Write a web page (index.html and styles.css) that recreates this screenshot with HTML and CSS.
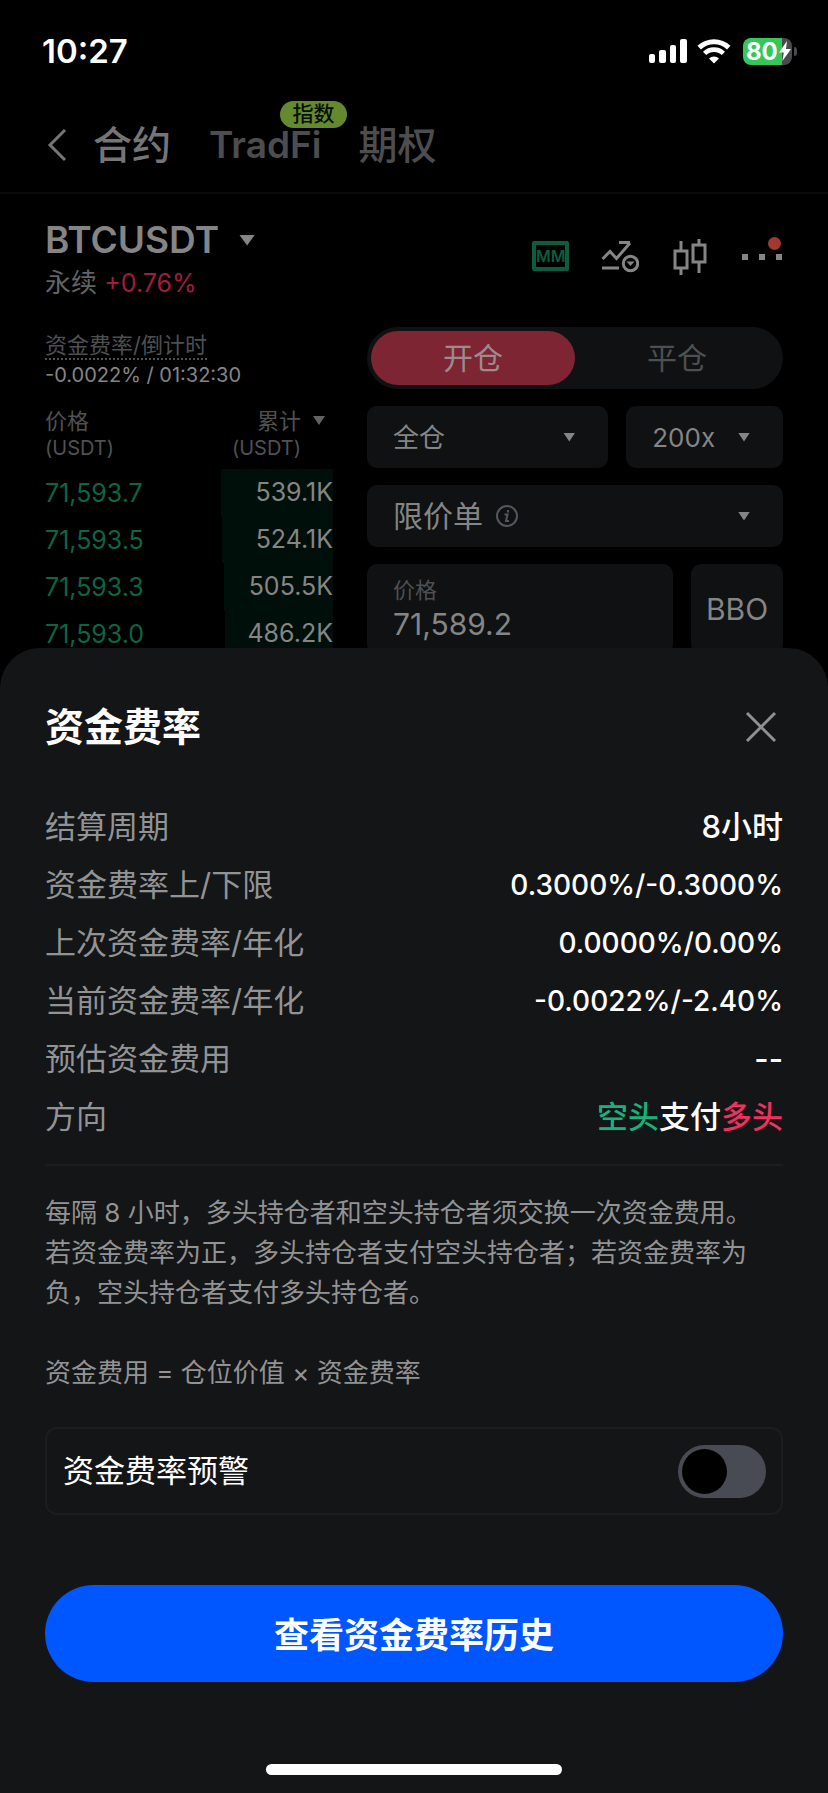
FILE: index.html
```html
<!DOCTYPE html>
<html lang="zh-CN">

    <head>
        <meta charset="utf-8">
        <meta name="viewport" content="width=device-width, initial-scale=1">
        <title>资金费率</title>
        <link rel="stylesheet" href="styles.css">
    </head>

    <body>

        <div class="statusbar">
            <span class="clock">10:27</span>
            <div class="status-icons">
                <svg class="signal" width="38" height="26" viewBox="0 0 38 26" fill="#fff">
                    <rect x="0" y="16" width="6" height="9" rx="2"/>
                    <rect x="10" y="12" width="7" height="13" rx="2"/>
                    <rect x="21" y="7" width="6" height="18" rx="2"/>
                    <rect x="31" y="1" width="7" height="24" rx="2"/>
                </svg>
                <svg class="wifi" width="34" height="26" viewBox="0 0 34 26">
                    <path d="M2.2 9.6a21.5 21.5 0 0 1 29.6 0" fill="none" stroke="#fff" stroke-width="5"/>
                    <path d="M7.6 15.4a13.6 13.6 0 0 1 18.8 0" fill="none" stroke="#fff" stroke-width="4.6"/>
                    <path d="M12 20.400a7.500 7.500 0 0 1 10 0L17 25.600z" fill="#fff"/>
                </svg>
                <div class="battery">
                    <span>80</span>
                    <svg width="14" height="20" viewBox="0 0 14 20"><path d="M9 0L1 11.4h4.8L4.4 20 13 8H8z" fill="#fff"/></svg>
                </div>
            </div>
        </div>

        <nav class="topnav">
            <button class="back" aria-label="返回">
                <svg width="20" height="34" viewBox="0 0 20 34"><path d="M18 2L3 17l15 15" fill="none" stroke="currentColor" stroke-width="3"/></svg>
            </button>
            <a href="#" class="active">合约</a>
            <a href="#" class="tradfi">TradFi<span class="badge">指数</span></a>
            <a href="#">期权</a>
        </nav>

        <div class="symbol">
            <div>
                <button class="pair">BTCUSDT <i class="caret big"></i></button>
                <div class="change">永续 <span>+0.76%</span></div>
            </div>
            <div class="tools">
                <button class="mm">MM</button>
                <button aria-label="图表">
                    <svg width="38" height="38" viewBox="0 0 38 38" fill="none" stroke="currentColor" stroke-width="3">
                        <path d="M1.500 22l7.500-7.500 6.500 7L29 6M18 5.500h11M1 31h17"/>
                        <circle cx="29.500" cy="26.500" r="7.200"/>
                        <path d="M25.500 24.500h8l-4 4.500z" fill="currentColor" stroke="none"/>
                    </svg>
                </button>
                <button aria-label="K线">
                    <svg width="38" height="38" viewBox="0 0 38 38" fill="none" stroke="currentColor" stroke-width="3">
                        <path d="M4 14h12v17H4zM22 8h12v17H22zM10 4v10M10 31v7M28 2v6M28 25v11"/>
                    </svg>
                </button>
                <button class="more" aria-label="更多">
                    <svg width="42" height="38" viewBox="0 0 42 38">
                        <path d="M1 17h6v6H1zM18 17h6v6h-6zM35 17h6v6h-6z" fill="currentColor"/>
                    </svg>
                </button>
            </div>
        </div>

        <main class="trade">

            <div class="book">
                <div class="funding"><a href="#">资金费率/倒计时</a></div>
                <div class="countdown">-0.0022% / 01:32:30</div>
                <table>
                    <thead>
                        <tr>
                            <th>价格<br><small>(USDT)</small></th>
                            <th class="total"><div>累计<br><small>(USDT)</small></div><i class="caret small"></i></th>
                        </tr>
                    </thead>
                    <tbody>
                        <tr><td>71,593.7</td><td><span class="depth" style="width:78%">539.1K</span></td></tr>
                        <tr><td>71,593.5</td><td><span class="depth" style="width:77%">524.1K</span></td></tr>
                        <tr><td>71,593.3</td><td><span class="depth" style="width:76%">505.5K</span></td></tr>
                        <tr><td>71,593.0</td><td><span class="depth" style="width:75%">486.2K</span></td></tr>
                    </tbody>
                </table>
            </div>

            <form class="order">
                <div class="side">
                    <button type="button" class="on">开仓</button>
                    <button type="button">平仓</button>
                </div>
                <div class="row">
                    <div class="field margin">
                        <select aria-label="保证金模式"><option>全仓</option></select>
                        <i class="caret"></i>
                    </div>
                    <div class="field lever">
                        <select aria-label="杠杆"><option>200x</option></select>
                        <i class="caret"></i>
                    </div>
                </div>
                <div class="field type">
                    <select aria-label="订单类型"><option>限价单</option></select>
                    <svg width="24" height="24" viewBox="0 0 24 24" fill="none" stroke="#55575a" stroke-width="2">
                        <circle cx="12" cy="12" r="10"/>
                        <path d="M9.500 10.500h3l-1.500 6.500h3M13 6v2.500"/>
                    </svg>
                    <i class="caret"></i>
                </div>
                <div class="row">
                    <div class="price">
                        <label for="price">价格</label>
                        <input id="price" type="text" value="71,589.2">
                    </div>
                    <button type="button" class="bbo">BBO</button>
                </div>
            </form>

        </main>

        <section class="sheet">

            <div class="sheet-head">
                <h1>资金费率</h1>
                <button class="close" aria-label="关闭">
                    <svg width="32" height="32" viewBox="0 0 32 32"><path d="M2 2l28 28M30 2L2 30" stroke="currentColor" stroke-width="3"/></svg>
                </button>
            </div>

            <dl class="info">
                <div><dt>结算周期</dt><dd>8小时</dd></div>
                <div><dt>资金费率上/下限</dt><dd class="num">0.3000%/-0.3000%</dd></div>
                <div><dt>上次资金费率/年化</dt><dd class="num">0.0000%/0.00%</dd></div>
                <div><dt>当前资金费率/年化</dt><dd class="num">-0.0022%/-2.40%</dd></div>
                <div><dt>预估资金费用</dt><dd>--</dd></div>
                <div><dt>方向</dt><dd><span class="green">空头</span>支付<span class="red">多头</span></dd></div>
            </dl>

            <div class="desc">
                <p>每隔 8 小时，多头持仓者和空头持仓者须交换一次资金费用。<br>若资金费率为正，多头持仓者支付空头持仓者；若资金费率为负，空头持仓者支付多头持仓者。</p>
                <p>资金费用 = 仓位价值 × 资金费率</p>
            </div>

            <div class="alert">
                <label for="alert">资金费率预警</label>
                <input id="alert" class="switch" type="checkbox" role="switch">
            </div>

            <button class="history">查看资金费率历史</button>

            <div class="home"></div>

        </section>

    </body>

</html>
```
FILE: styles.css
```css
*{
    box-sizing: border-box;
}

body{
    margin: 0;
    min-height: 100vh;
    background-color: #000;
    color: #858585;
    font-family: Inter, "Noto Sans CJK SC", sans-serif;
}

button, input, select{
    font: inherit;
    color: inherit;
    background: none;
    border: none;
    margin: 0;
    padding: 0;
    appearance: none;
}

button{
    cursor: pointer;
}

a{
    color: inherit;
    text-decoration: none;
}

svg{
    display: block;
}

.caret{
    width: 12px;
    height: 9px;
    background-color: #858585;
    clip-path: polygon(0 0, 100% 0, 50% 100%);
}

.caret.big{
    width: 16px;
    height: 11px;
}

.caret.small{
    background-color: #626262;
}

/* status bar */

.statusbar{
    display: flex;
    justify-content: space-between;
    align-items: center;
    height: 102px;
    padding: 0 31px 0 42px;
    color: #fff;
}

.clock{
    font-size: 33px;
    font-weight: 600;
}

.status-icons{
    display: flex;
    align-items: center;
    gap: 10px;
}

.battery{
    display: flex;
    align-items: center;
    position: relative;
    width: 49px;
    height: 27px;
    margin: 0 5px 0 2px;
    padding-left: 3px;
    border-radius: 8px;
    background: linear-gradient(to right, #34c759 80%, #4a4a4c 80%);
    font-size: 24px;
    font-weight: 700;
    line-height: 27px;
}

.battery::after{
    content: "";
    position: absolute;
    right: -5px;
    top: 9px;
    width: 3px;
    height: 9px;
    border-radius: 0 3px 3px 0;
    background-color: #4a4a4c;
}

/* nav */

.topnav{
    display: flex;
    align-items: center;
    height: 92px;
    padding: 0 47px 4px;
    border-bottom: 2px solid #0a0a0b;
    font-size: 39px;
    font-weight: 500;
    line-height: 48px;
    color: #4d4d50;
}

.topnav .back{
    margin-right: 26px;
    color: #757575;
}

.topnav a{
    margin-right: 38px;
}

.topnav .active{
    color: #757575;
}

.topnav .tradfi{
    position: relative;
    margin-right: 37px;
    font-size: 37px;
    font-weight: 600;
}

.badge{
    position: absolute;
    left: 71px;
    top: -20px;
    width: 67px;
    height: 27px;
    border-radius: 14px;
    background-color: #64892f;
    color: #071004;
    font-size: 21px;
    font-weight: 500;
    line-height: 26px;
    text-align: center;
}

/* symbol */

.symbol{
    display: flex;
    justify-content: space-between;
    align-items: flex-start;
    padding: 22px 45px 0;
}

.pair{
    display: flex;
    align-items: center;
    gap: 20px;
    font-size: 37px;
    font-weight: 600;
    line-height: 48px;
}

.change{
    font-size: 26px;
    line-height: 38px;
    color: #626365;
}

.change span{
    color: #a11c3d;
    font-size: 25px;
}

.tools{
    display: flex;
    align-items: center;
    gap: 32px;
    padding-top: 21px;
}

.mm{
    width: 37px;
    height: 30px;
    border: 4px solid #0b5c41;
    border-radius: 2px;
    color: #0b5c41;
    font-size: 16px;
    font-weight: 600;
    line-height: 22px;
}

.more{
    position: relative;
}

.more::after{
    content: "";
    position: absolute;
    right: 2px;
    top: 0;
    width: 13px;
    height: 13px;
    border-radius: 50%;
    background-color: #a03a30;
}

/* order book + form */

.trade{
    display: grid;
    grid-template-columns: minmax(0, 9fr) minmax(0, 13fr);
    gap: 34px;
    padding: 25px 45px 0;
}

.funding, .countdown{
    line-height: 30px;
}

.funding{
    margin-top: 3px;
    font-size: 22px;
    color: #4e4f51;
}

.funding a{
    border-bottom: 2px dotted #4e4f51;
}

.countdown{
    font-size: 20px;
}

.book table{
    width: 100%;
    margin-top: 18px;
    border-collapse: collapse;
    font-size: 25px;
}

.book th, .book td{
    width: 50%;
    padding: 0;
    text-align: left;
}

.book th{
    padding-bottom: 8px;
    font-size: 22px;
    font-weight: 400;
    line-height: 26px;
    color: #505153;
}

.book small{
    font-size: 20px;
}

.book .total{
    display: flex;
    justify-content: flex-end;
    gap: 12px;
    width: auto;
    padding-right: 8px;
    text-align: right;
}

.book .total .caret{
    margin-top: 8px;
}

.book td{
    height: 47px;
    color: #0b6546;
}

.book .depth{
    display: block;
    margin-left: auto;
    background-color: #010f0a;
    color: #858585;
    line-height: 47px;
    text-align: right;
}

.order{
    display: flex;
    flex-direction: column;
    gap: 17px;
}

.side{
    display: flex;
    height: 62px;
    padding: 4px;
    border-radius: 31px;
    background-color: #0f1113;
    font-size: 30px;
    color: #4e4f51;
}

.side button{
    flex: 1;
    padding-bottom: 4px;
    border-radius: 27px;
}

.side .on{
    background-color: #7d2533;
    color: #9b8b8d;
}

.row{
    display: flex;
    gap: 18px;
}

.field, .price, .bbo{
    border-radius: 10px;
    background-color: #0f1113;
}

.field{
    display: flex;
    align-items: center;
    height: 62px;
    padding: 0 33px 0 26px;
    font-size: 26px;
}

.field .caret{
    margin-left: auto;
}

.margin{
    width: 58%;
}

.lever{
    flex: 1;
}

.type{
    gap: 12px;
    font-size: 30px;
}

.price{
    flex: 1;
    min-width: 0;
    height: 90px;
    padding: 11px 26px;
}

.price label{
    display: block;
    font-size: 22px;
    line-height: 30px;
    color: #4e4f51;
}

.price input{
    display: block;
    width: 100%;
    font-size: 30px;
    line-height: 38px;
}

.bbo{
    width: 92px;
    font-size: 30px;
}

/* bottom sheet */

.sheet{
    position: fixed;
    left: 0;
    right: 0;
    bottom: 0;
    padding: 50px 45px 18px;
    border-radius: 40px 40px 0 0;
    background-color: #141517;
    color: #fff;
}

.sheet-head{
    display: flex;
    justify-content: space-between;
    align-items: center;
    padding-right: 6px;
}

.sheet h1{
    margin: 0;
    font-size: 39px;
    font-weight: 700;
    line-height: 58px;
}

.close{
    color: #8e9092;
}

.info{
    margin: 0;
    padding: 42px 0 18px;
    border-bottom: 2px solid #1c1d1f;
    font-size: 31px;
    line-height: 58px;
}

.info div{
    display: flex;
    justify-content: space-between;
}

.info dt{
    color: #929395;
}

.info dd{
    margin: 0;
    font-weight: 500;
}

.info .num{
    font-size: 28px;
}

.green{
    color: #17b37c;
}

.red{
    color: #f0305f;
}

.desc{
    padding: 27px 0 34px;
    font-size: 26px;
    line-height: 40px;
    color: #929395;
}

.desc p{
    margin: 0 0 40px;
}

.desc p:last-child{
    margin: 0;
}

.alert{
    display: flex;
    justify-content: space-between;
    align-items: center;
    height: 88px;
    padding: 0 15px 0 16px;
    border: 2px solid #1c1d1f;
    border-radius: 12px;
    font-size: 31px;
}

.alert label{
    padding-bottom: 5px;
}

.switch{
    width: 88px;
    height: 53px;
    padding: 4px;
    border-radius: 27px;
    background-color: #494b54;
}

.switch::before{
    content: "";
    display: block;
    width: 45px;
    height: 45px;
    border-radius: 50%;
    background-color: #000;
}

.switch:checked::before{
    margin-left: auto;
}

.history{
    display: block;
    width: 100%;
    height: 97px;
    margin-top: 70px;
    padding-bottom: 3px;
    border-radius: 49px;
    background-color: #0056ff;
    font-size: 35px;
    font-weight: 600;
}

.home{
    width: 40%;
    height: 11px;
    margin: 82px auto 0;
    border-radius: 6px;
    background-color: #fff;
}
```
